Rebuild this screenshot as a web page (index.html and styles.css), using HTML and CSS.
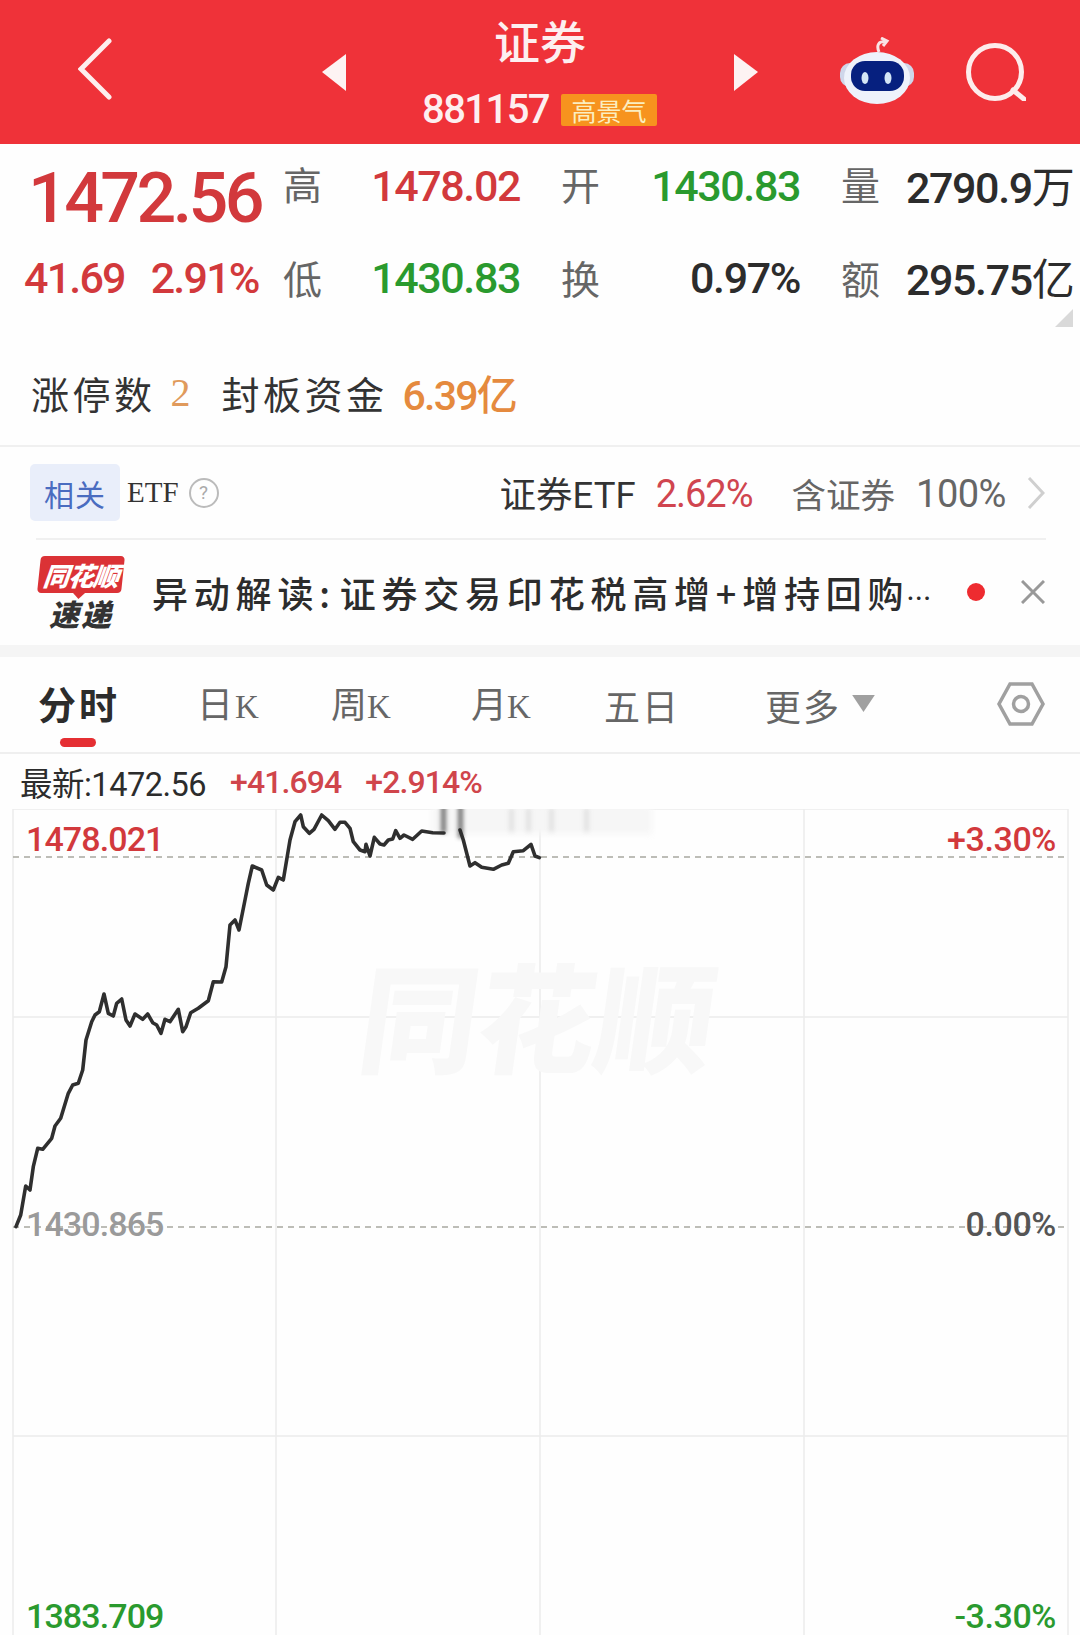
FILE: index.html
```html
<!DOCTYPE html>
<html lang="zh-CN">
<head>
<meta charset="utf-8">
<title>证券</title>
<link rel="stylesheet" href="styles.css">
</head>
<body>
<header class="top">
  <svg class="back" viewBox="0 0 34 62"><path d="M31 3 3 31l28 28"/></svg>
  <svg class="tri tri-left" viewBox="0 0 24 37"><path d="M24 0v37L0 18z"/></svg>
  <div class="title-block">
    <div class="title">证券</div>
    <div class="sub"><span class="code">881157</span><span class="badge">高景气</span></div>
  </div>
  <svg class="tri" viewBox="0 0 24 37"><path d="M0 0v37l24-19z"/></svg>
  <svg class="robot" viewBox="0 0 76 68">
    <path class="antenna" d="M39 15c-3-7 0-11 6-10M41 1l6 3-4 5"/>
    <rect class="ear" x="0" y="26" width="74" height="24" rx="10"/>
    <ellipse class="shell" cx="37" cy="41" rx="33" ry="26"/>
    <rect class="visor" x="11" y="24" width="53" height="30" rx="14"/>
    <ellipse class="eye" cx="25" cy="41" rx="3.500" ry="6"/>
    <ellipse class="eye" cx="48" cy="41" rx="3.500" ry="6"/>
  </svg>
  <svg class="search" viewBox="0 0 60 58"><circle cx="29" cy="29" r="26.5"/><path d="M47 47l12 10"/></svg>
</header>

<section class="quote">
  <div class="price up">1472.56</div>
  <div class="lab lab-top">高</div>
  <div class="val up">1478.02</div>
  <div class="lab lab-r lab-top">开</div>
  <div class="val down">1430.83</div>
  <div class="lab lab-r lab-top">量</div>
  <div class="val val-l">2790.9<span class="unit">万</span></div>

  <div class="change up"><span>41.69</span><span>2.91%</span></div>
  <div class="lab lab-low">低</div>
  <div class="val down">1430.83</div>
  <div class="lab lab-r lab-low">换</div>
  <div class="val">0.97%</div>
  <div class="lab lab-r lab-low">额</div>
  <div class="val val-l">295.75<span class="unit">亿</span></div>
  <svg class="corner" viewBox="0 0 18 18"><path d="M18 0v18H0z"/></svg>
</section>

<section class="limit">
  <span class="limit-lab">涨停数</span><span class="limit-n">2</span>
  <span class="limit-lab limit-b">封板资金</span><span class="limit-m">6.39亿</span>
</section>

<section class="etf">
  <span class="tag">相关</span>
  <span class="etf-word">ETF</span>
  <span class="help">?</span>
  <span class="etf-name">证券ETF</span>
  <span class="etf-pct">2.62%</span>
  <span class="etf-hold">含证券</span>
  <span class="etf-share">100%</span>
  <svg class="more" viewBox="0 0 18 32"><path d="M2 1l14 15L2 31"/></svg>
</section>

<section class="news">
  <div class="logo">
    <div class="logo-top"><span>同花顺</span></div>
    <div class="logo-bottom">速递</div>
  </div>
  <div class="news-text">异动解读: 证券交易印花税高增+增持回购<span class="ell">…</span></div>
  <span class="dot"></span>
  <svg class="close" viewBox="0 0 24 24"><path d="M1 1l22 22M23 1 1 23"/></svg>
</section>

<div class="band"></div>

<nav class="tabs">
  <div class="tab tab-on">分时</div>
  <div class="tab">日<i class="k-gap">K</i></div>
  <div class="tab">周<i>K</i></div>
  <div class="tab">月<i>K</i></div>
  <div class="tab tab-wide">五日</div>
  <div class="tab tab-wide tab-more">更多<svg class="caret" viewBox="0 0 24 18"><path d="M0 0h24L12 18z"/></svg></div>
  <svg class="gear" viewBox="0 0 48 44"><path d="M13 2h22l11 20-11 20H13L2 22z"/><circle cx="24" cy="22" r="7.500"/></svg>
</nav>

<div class="info">
  <span class="info-now">最新:1472.56</span>
  <span class="info-up">+41.694</span>
  <span class="info-up">+2.914%</span>
</div>

<section class="chart">
  <svg class="plot" viewBox="0 809 1080 826">
    <g class="grid">
      <path d="M13 809H1068M13 1017H1068M13 1436H1068M13 809V1635M1068 809V1635M276 809V1635M540 809V1635M804 809V1635"/>
    </g>
    <path class="dash" d="M13 857H1068M13 1227H1068"/>
    <g class="smear">
      <rect x="432" y="806" width="220" height="28"/>
    </g>
    <g class="smear-dark">
      <rect x="510" y="808" width="3" height="24"/>
      <rect x="527" y="808" width="3" height="24"/>
      <rect x="550" y="808" width="3" height="24"/>
      <rect x="585" y="808" width="3" height="24"/>
    </g>
    <g class="smear-bar">
      <rect x="441" y="803" width="5" height="30"/>
      <rect x="458" y="802" width="5" height="36"/>
    </g>
    <polyline class="line" points="16,1226.7 20.700,1215 25.700,1186 30,1190 33.300,1166.700 37.700,1148.300 42.700,1149.300 51.700,1138.300 55,1126 60.700,1118.300 68.300,1093.300 72.700,1085 78.300,1083.300 82.700,1070 86,1040 91.700,1021.700 95,1015 99.300,1011.700 104,994 108.300,1013.300 113.300,1016 116.700,1003.300 121.700,999 126,1020 130,1026 135,1014 142.700,1019.300 147.700,1014 152.700,1022.700 156.700,1025 161,1033.300 165,1019.300 170,1021.700 178.300,1009.300 182.700,1031.700 186,1026.700 190.700,1012.700 198.300,1008.300 208.300,1000.700 213.300,981.700 221.700,982 226,966.700 230,925 235,920 239,930 245,900 248.300,883.300 252.300,866 261.700,870 266.700,885 273.300,890 278.300,877.300 283.300,880 290,840 295,821.700 300.700,815 303.300,826.700 309.300,833.300 314,829.300 321.700,815 328.300,820.700 335,829.300 340,822.300 345,822.300 350,828.300 353.300,841.700 360,850 365,851.700 366,844.300 370,856 374.300,837.300 380,844 384,845 388.300,840 392.700,839 395.700,830.700 400,838.300 404,835 412.700,839.300 421.700,831 432.700,832.700 444,833"/>
    <polyline class="line" points="460,830 463.300,840 470,866 475,862.700 481.700,867.300 493.300,869.300 501.700,865 508.300,863.300 513.300,851.700 523.300,850.700 531,844.300 535,856 539.300,857.700"/>
  </svg>
  <div class="mark">同花顺</div>
  <div class="axis ax-tl up">1478.021</div>
  <div class="axis ax-tr up">+3.30%</div>
  <div class="axis ax-ml flat">1430.865</div>
  <div class="axis ax-mr flat">0.00%</div>
  <div class="axis ax-bl down">1383.709</div>
  <div class="axis ax-br down">-3.30%</div>
</section>
</body>
</html>
```

FILE: styles.css
```css
* { box-sizing: border-box; }
html, body { margin: 0; padding: 0; }
body {
  width: 1080px;
  height: 1635px;
  overflow: hidden;
  background: #fefefe;
  color: #2c2c2c;
  font-family: "Roboto", "Noto Sans CJK SC", sans-serif;
}
svg { display: block; flex: none; }

.up { color: #d2393c; }
.down { color: #2a9a2e; }
.flat { color: #9a9a9a; }

/* header */
.top {
  display: flex;
  align-items: center;
  height: 144px;
  padding-left: 78px;
  background: #ef3239;
  color: #fff;
}
.back { width: 34px; height: 62px; margin-top: -6px; fill: none; stroke: #fdeeee; stroke-width: 5; stroke-linecap: round; stroke-linejoin: miter; }
.tri { width: 24px; height: 37px; fill: #fdf3f3; }
.tri-left { margin-left: 210px; }
.title-block { width: 388px; display: flex; flex-direction: column; align-items: center; }
.title { font-family: "Noto Sans CJK SC", sans-serif; font-size: 46px; font-weight: 500; line-height: 50px; margin-top: -3px; color: #fdeff0; }
.sub { display: flex; align-items: center; margin-top: 29px; height: 34px; }
.code { font-size: 40px; font-weight: 500; letter-spacing: -1.600px; line-height: 34px; color: #fdeff0; margin-left: -1px; }
.badge {
  display: flex; align-items: center; justify-content: center;
  width: 96px; height: 32px; margin-left: 12px;
  background: #f7931e; color: #fbeec0; border-radius: 2px;
  font-family: "Noto Sans CJK SC", sans-serif; font-size: 25px; line-height: 32px;
}
.robot { width: 76px; height: 68px; margin-left: 82px; margin-top: -2px; }
.antenna { fill: none; stroke: #f9e4e6; stroke-width: 3; }
.ear { fill: #cfd6ea; }
.shell { fill: #eef2fb; }
.visor { fill: #06207f; }
.eye { fill: #d4e6f6; }
.search { width: 60px; height: 58px; margin-left: 50px; fill: none; stroke: #fdecec; stroke-width: 5; stroke-linecap: round; }

/* quote */
.quote {
  position: relative;
  display: grid;
  grid-template-columns: 240px 60px 196px 80px 200px 80px 200px;
  grid-template-rows: 84px 100px;
  align-items: center;
  padding-left: 24px;
}
.price { font-size: 70px; font-weight: 500; letter-spacing: -3.600px; line-height: 84px; margin-left: 4px; margin-top: 24px; white-space: nowrap; }
.change { display: flex; gap: 26px; font-size: 43px; font-weight: 500; letter-spacing: -1.800px; white-space: nowrap; }
.lab { font-family: "Noto Sans CJK SC", sans-serif; font-size: 39px; line-height: 48px; color: #666; text-align: right; padding-right: 2px; }
.lab-top { margin-top: -6px; }
.lab-low { margin-top: -3px; }
.lab-r { padding-right: 0; }
.val { font-size: 43px; font-weight: 500; letter-spacing: -1.400px; line-height: 48px; text-align: right; white-space: nowrap; }
.val-l { text-align: left; padding-left: 26px; }
.unit { font-family: "Noto Sans CJK SC", sans-serif; font-size: 43px; font-weight: 400; letter-spacing: 0; }
.corner { position: absolute; right: 7px; bottom: 1px; width: 18px; height: 18px; fill: #d9d9d9; }

/* limit */
.limit {
  display: flex;
  align-items: center;
  height: 119px;
  padding: 11px 0 0 31px;
  border-bottom: 2px solid #f0f0f0;
  font-family: "Noto Sans CJK SC", sans-serif;
}
.limit-lab { font-size: 38px; letter-spacing: 3.500px; color: #333; }
.limit-b { margin-left: 31px; }
.limit-n { font-size: 40px; color: #e09a5c; margin-left: 15px; font-family: "Liberation Serif", serif; }
.limit-m { font-family: "Roboto", "Noto Sans CJK SC", sans-serif; font-size: 41px; font-weight: 500; letter-spacing: -1.800px; color: #e58a3e; margin-left: 15px; }

/* etf */
.etf {
  display: flex;
  align-items: center;
  height: 91px;
  padding-left: 30px;
  font-family: "Noto Sans CJK SC", sans-serif;
  white-space: nowrap;
}
.tag {
  width: 90px; height: 57px; border-radius: 5px; background: #e9eefa; color: #4a6cc0;
  display: flex; align-items: center; justify-content: center;
  font-size: 30px; letter-spacing: 1px;
}
.etf-word { font-family: "Liberation Serif", serif; font-size: 29px; margin-left: 7px; color: #333; }
.help {
  width: 30px; height: 30px; margin-left: 10px; border: 2px solid #bbb; border-radius: 50%;
  display: flex; align-items: center; justify-content: center;
  font-family: "Roboto", sans-serif; font-size: 19px; color: #aaa;
}
.etf-name { margin-left: 281px; font-family: "Roboto", "Noto Sans CJK SC", sans-serif; font-size: 36.500px; color: #333; }
.etf-pct { margin-left: 20px; margin-top: 2px; font-family: "Roboto", sans-serif; font-size: 38px; letter-spacing: -1px; color: #d0454f; }
.etf-hold { margin-left: 39px; font-size: 34.500px; color: #666; }
.etf-share { margin-left: 21px; margin-top: 2px; font-family: "Roboto", sans-serif; font-size: 38px; letter-spacing: -0.500px; color: #666; }
.more { width: 18px; height: 32px; margin-left: 21px; fill: none; stroke: #cfcfcf; stroke-width: 3; }

/* news */
.news {
  position: relative;
  display: flex;
  align-items: center;
  height: 107px;
  padding-left: 37px;
  font-family: "Noto Sans CJK SC", sans-serif;
}
.news::before {
  content: "";
  position: absolute;
  left: 36px; top: 0;
  width: 1010px;
  border-top: 2px solid #f0f0f0;
}
.logo { width: 88px; display: flex; flex-direction: column; align-items: center; }
.logo-top {
  position: relative;
  width: 84px; height: 37px; border-radius: 4px;
  background: #db3236; transform: skewX(-6deg);
  display: flex; align-items: center; justify-content: center;
}
.logo-top::after {
  content: ""; position: absolute; left: 36px; bottom: -6px;
  border-left: 6px solid transparent; border-right: 6px solid transparent; border-top: 6px solid #db3236;
}
.logo-top span { color: #fff; font-size: 26px; font-weight: 900; line-height: 37px; font-style: italic; letter-spacing: -1px; }
.logo-bottom { margin-top: 5px; font-size: 30px; line-height: 30px; font-weight: 900; font-style: italic; color: #333; letter-spacing: 2px; }
.news-text { margin-left: 27px; width: 790px; font-size: 36px; font-weight: 500; letter-spacing: 5.800px; word-spacing: -10px; color: #2c2c2c; white-space: nowrap; }
.ell { font-size: 25px; letter-spacing: 0; margin-left: -3px; }
.dot { width: 18px; height: 18px; margin-left: 25px; border-radius: 50%; background: #ee2b30; }
.close { width: 24px; height: 24px; margin-left: 36px; fill: none; stroke: #999; stroke-width: 3; }

.band { height: 12px; background: #f5f5f5; }

/* tabs */
.tabs {
  position: relative;
  display: grid;
  grid-template-columns: 159px 134px 140px 133px 161px 232px auto;
  align-items: center;
  height: 97px;
  padding-left: 38px;
  border-bottom: 2px solid #efefef;
  font-family: "Noto Sans CJK SC", sans-serif;
  font-size: 36px;
  color: #666;
}
.tab { white-space: nowrap; line-height: 44px; margin-top: 0; }
.tab i { font-family: "Liberation Serif", serif; font-style: normal; font-size: 33px; }
.k-gap { margin-left: 2px; }
.tab-wide { letter-spacing: 2px; }
.tab-on { position: relative; font-size: 38px; font-weight: 700; letter-spacing: 3px; color: #2c2c2c; margin-top: -4px; }
.tab-on::after {
  content: ""; position: absolute; left: 22px; top: 57px;
  width: 36px; height: 9px; border-radius: 5px; background: #e52f33;
}
.tab-more { display: flex; align-items: center; }
.caret { width: 23px; height: 17px; margin-left: 11px; margin-top: -3px; fill: #a0a0a0; }
.gear { width: 48px; height: 44px; fill: none; stroke: #a0a0a0; stroke-width: 3.500; margin-top: -2px; }

/* info */
.info {
  display: flex;
  align-items: center;
  height: 55px;
  padding-left: 20px;
  font-size: 32.500px;
  letter-spacing: -0.500px;
  white-space: nowrap;
}
.info-now { font-family: "Roboto", "Noto Sans CJK SC", sans-serif; color: #2c2c2c; }
.info-up { color: #d0454b; font-size: 32px; font-weight: 500; letter-spacing: -0.900px; margin-left: 24px; }

/* chart */
.chart { position: relative; height: 826px; overflow: hidden; }
.plot { position: absolute; left: 0; top: 0; width: 1080px; height: 826px; }
.grid path { fill: none; stroke: #ececec; stroke-width: 1.500; }
.dash { fill: none; stroke: #a8a8a0; stroke-width: 1.500; stroke-dasharray: 6 5; }
.line { fill: none; stroke: #2f2f2f; stroke-width: 3.600; stroke-linejoin: round; stroke-linecap: round; }
.smear { filter: blur(3px); fill: #f6f6f6; }
.smear-dark { filter: blur(2.500px); fill: #b4b4b4; opacity: 0.500; }
.smear-bar { filter: blur(2px); fill: #555; opacity: 0.800; }
.mark {
  position: absolute; left: 362px; top: 134px;
  font-family: "Noto Sans CJK SC", sans-serif; font-size: 118px; line-height: 140px; font-weight: 900; letter-spacing: 0;
  color: #f8f8f8; transform: skewX(-8deg);
}
.axis { position: absolute; font-size: 34px; font-weight: 500; line-height: 40px; letter-spacing: -0.400px; white-space: nowrap; }
.ax-tl { left: 26px; top: 10px; letter-spacing: -0.900px; }
.ax-tr { right: 24px; top: 10px; }
.ax-ml { left: 26px; top: 395px; letter-spacing: -0.900px; }
.ax-mr { right: 24px; top: 395px; color: #555; }
.ax-bl { left: 26px; top: 787px; letter-spacing: -0.900px; }
.ax-br { right: 24px; top: 787px; }
```
